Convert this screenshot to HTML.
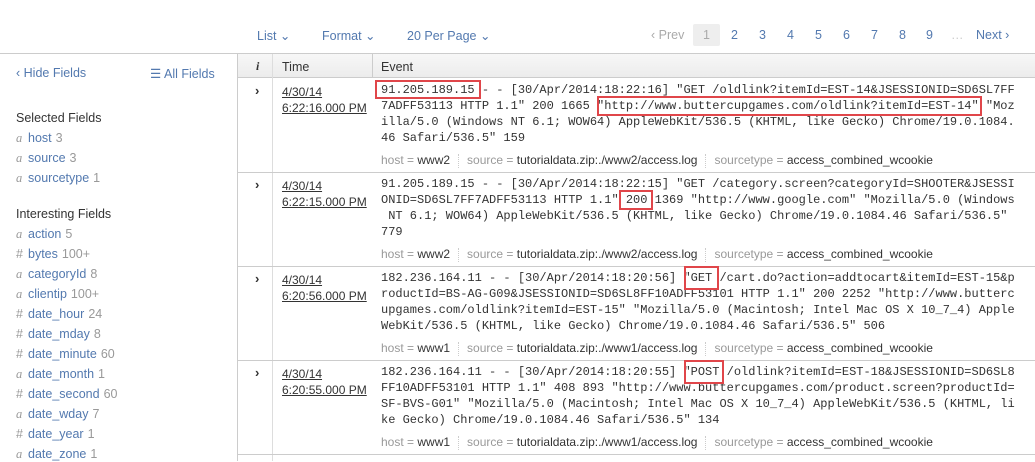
<!DOCTYPE html>
<html><head><meta charset="utf-8"><style>
*{margin:0;padding:0;box-sizing:border-box}
body{width:1035px;height:461px;overflow:hidden;background:#fff;font-family:"Liberation Sans",sans-serif;font-size:12px;color:#333;position:relative}
.a{position:absolute;white-space:nowrap}
.blue{color:#5379af}
.g{color:#999}
.tb{top:28px;font-size:12.5px;color:#5379af}
.fl{left:16px;font-size:12.5px}
.fl i{font-family:"Liberation Serif",serif;color:#999;font-style:italic;display:inline-block;width:12px}
.fl b{font-weight:normal;color:#999;display:inline-block;width:12px}
.fl span{color:#999;margin-left:4px}
.mono{font-family:"Liberation Mono",monospace;font-size:12px;line-height:16px;color:#333;white-space:pre}
.meta{font-size:12px;color:#999}
.meta s{text-decoration:none;color:#333}
.sep{display:inline-block;border-left:1px dotted #ccc;height:14px;vertical-align:middle;margin:0 8px}
.box{position:absolute;border:2px solid #e0464a}
.tm{left:282px;color:#333;font-size:12px;line-height:16px;text-decoration:underline;text-decoration-color:#333}
.chev{left:255px;font-size:13px;font-weight:bold;color:#333}
.hr{position:absolute;left:237px;width:798px;height:1px;background:#ccc}
.pg{top:28px;font-size:12.5px;color:#5379af}
</style></head><body>
<div class="a tb" style="left:257px">List ⌄</div>
<div class="a tb" style="left:322px">Format ⌄</div>
<div class="a tb" style="left:407px">20 Per Page ⌄</div>
<div class="a" style="left:693px;top:24px;width:27px;height:22px;background:#eee;border-radius:2px"></div>
<div class="a pg g" style="left:651px;color:#aaa">‹ Prev</div>
<div class="a pg" style="left:703px;color:#aaa">1</div>
<div class="a pg" style="left:731px">2</div>
<div class="a pg" style="left:759px">3</div>
<div class="a pg" style="left:787px">4</div>
<div class="a pg" style="left:815px">5</div>
<div class="a pg" style="left:843px">6</div>
<div class="a pg" style="left:871px">7</div>
<div class="a pg" style="left:899px">8</div>
<div class="a pg" style="left:926px">9</div>
<div class="a pg" style="left:951px;color:#ccc">…</div>
<div class="a pg" style="left:976px">Next ›</div>
<div class="a" style="left:0;top:53px;width:1035px;height:1px;background:#ccc"></div>
<div class="a" style="left:237px;top:54px;width:798px;height:24px;background:linear-gradient(#f7f7f7,#ececec);border-bottom:1px solid #ccc"></div>
<div class="a" style="left:237px;top:54px;width:1px;height:407px;background:#ccc"></div>
<div class="a" style="left:272px;top:54px;width:1px;height:407px;background:#ddd"></div>
<div class="a" style="left:372px;top:54px;width:1px;height:24px;background:#ccc"></div>
<div class="a" style="left:256px;top:59px;font-family:'Liberation Serif',serif;font-style:italic;font-weight:bold;font-size:12px">i</div>
<div class="a" style="left:282px;top:60px;font-size:12.5px">Time</div>
<div class="a" style="left:381px;top:60px;font-size:12.5px">Event</div>
<div class="a blue" style="left:16px;top:66px;font-size:12.5px">‹ Hide Fields</div>
<div class="a blue" style="left:150px;top:66px;font-size:12.5px">☰ All Fields</div>
<div class="a" style="left:16px;top:111px;font-size:12.5px">Selected Fields</div>
<div class="a fl blue" style="top:131px"><i>a</i>host<span>3</span></div>
<div class="a fl blue" style="top:151px"><i>a</i>source<span>3</span></div>
<div class="a fl blue" style="top:171px"><i>a</i>sourcetype<span>1</span></div>
<div class="a" style="left:16px;top:207px;font-size:12.5px">Interesting Fields</div>
<div class="a fl blue" style="top:227px"><i>a</i>action<span>5</span></div>
<div class="a fl blue" style="top:247px"><b>#</b>bytes<span>100+</span></div>
<div class="a fl blue" style="top:267px"><i>a</i>categoryId<span>8</span></div>
<div class="a fl blue" style="top:287px"><i>a</i>clientip<span>100+</span></div>
<div class="a fl blue" style="top:307px"><b>#</b>date_hour<span>24</span></div>
<div class="a fl blue" style="top:327px"><b>#</b>date_mday<span>8</span></div>
<div class="a fl blue" style="top:347px"><b>#</b>date_minute<span>60</span></div>
<div class="a fl blue" style="top:367px"><i>a</i>date_month<span>1</span></div>
<div class="a fl blue" style="top:387px"><b>#</b>date_second<span>60</span></div>
<div class="a fl blue" style="top:407px"><i>a</i>date_wday<span>7</span></div>
<div class="a fl blue" style="top:427px"><b>#</b>date_year<span>1</span></div>
<div class="a fl blue" style="top:447px"><i>a</i>date_zone<span>1</span></div>

<!-- row 1 -->
<div class="a chev" style="top:83px">›</div>
<div class="a tm" style="top:84px">4/30/14<br>6:22:16.000 PM</div>
<div class="a mono" style="left:381px;top:82px">91.205.189.15 - - [30/Apr/2014:18:22:16] "GET /oldlink?itemId=EST-14&amp;JSESSIONID=SD6SL7FF
7ADFF53113 HTTP 1.1" 200 1665 "http://www.buttercupgames.com/oldlink?itemId=EST-14" "Moz
illa/5.0 (Windows NT 6.1; WOW64) AppleWebKit/536.5 (KHTML, like Gecko) Chrome/19.0.1084.
46 Safari/536.5" 159</div>
<div class="a meta" style="left:381px;top:153px">host = <s>www2</s><span class="sep"></span>source = <s>tutorialdata.zip:./www2/access.log</s><span class="sep"></span>sourcetype = <s>access_combined_wcookie</s></div>
<div class="box" style="left:375px;top:80px;width:106px;height:19px"></div>
<div class="box" style="left:597px;top:96px;width:385px;height:20px"></div>
<div class="hr" style="top:172px"></div>

<!-- row 2 -->
<div class="a chev" style="top:177px">›</div>
<div class="a tm" style="top:178px">4/30/14<br>6:22:15.000 PM</div>
<div class="a mono" style="left:381px;top:176px">91.205.189.15 - - [30/Apr/2014:18:22:15] "GET /category.screen?categoryId=SHOOTER&amp;JSESSI
ONID=SD6SL7FF7ADFF53113 HTTP 1.1" 200 1369 "http://www.google.com" "Mozilla/5.0 (Windows
 NT 6.1; WOW64) AppleWebKit/536.5 (KHTML, like Gecko) Chrome/19.0.1084.46 Safari/536.5"
779</div>
<div class="a meta" style="left:381px;top:247px">host = <s>www2</s><span class="sep"></span>source = <s>tutorialdata.zip:./www2/access.log</s><span class="sep"></span>sourcetype = <s>access_combined_wcookie</s></div>
<div class="box" style="left:619px;top:190px;width:34px;height:20px"></div>
<div class="hr" style="top:266px"></div>

<!-- row 3 -->
<div class="a chev" style="top:271px">›</div>
<div class="a tm" style="top:272px">4/30/14<br>6:20:56.000 PM</div>
<div class="a mono" style="left:381px;top:270px">182.236.164.11 - - [30/Apr/2014:18:20:56] "GET /cart.do?action=addtocart&amp;itemId=EST-15&amp;p
roductId=BS-AG-G09&amp;JSESSIONID=SD6SL8FF10ADFF53101 HTTP 1.1" 200 2252 "http://www.butterc
upgames.com/oldlink?itemId=EST-15" "Mozilla/5.0 (Macintosh; Intel Mac OS X 10_7_4) Apple
WebKit/536.5 (KHTML, like Gecko) Chrome/19.0.1084.46 Safari/536.5" 506</div>
<div class="a meta" style="left:381px;top:341px">host = <s>www1</s><span class="sep"></span>source = <s>tutorialdata.zip:./www1/access.log</s><span class="sep"></span>sourcetype = <s>access_combined_wcookie</s></div>
<div class="box" style="left:684px;top:266px;width:35px;height:24px"></div>
<div class="hr" style="top:360px"></div>

<!-- row 4 -->
<div class="a chev" style="top:365px">›</div>
<div class="a tm" style="top:366px">4/30/14<br>6:20:55.000 PM</div>
<div class="a mono" style="left:381px;top:364px">182.236.164.11 - - [30/Apr/2014:18:20:55] "POST /oldlink?itemId=EST-18&amp;JSESSIONID=SD6SL8
FF10ADFF53101 HTTP 1.1" 408 893 "http://www.buttercupgames.com/product.screen?productId=
SF-BVS-G01" "Mozilla/5.0 (Macintosh; Intel Mac OS X 10_7_4) AppleWebKit/536.5 (KHTML, li
ke Gecko) Chrome/19.0.1084.46 Safari/536.5" 134</div>
<div class="a meta" style="left:381px;top:435px">host = <s>www1</s><span class="sep"></span>source = <s>tutorialdata.zip:./www1/access.log</s><span class="sep"></span>sourcetype = <s>access_combined_wcookie</s></div>
<div class="box" style="left:684px;top:360px;width:40px;height:24px"></div>
<div class="hr" style="top:454px"></div>
</body></html>
